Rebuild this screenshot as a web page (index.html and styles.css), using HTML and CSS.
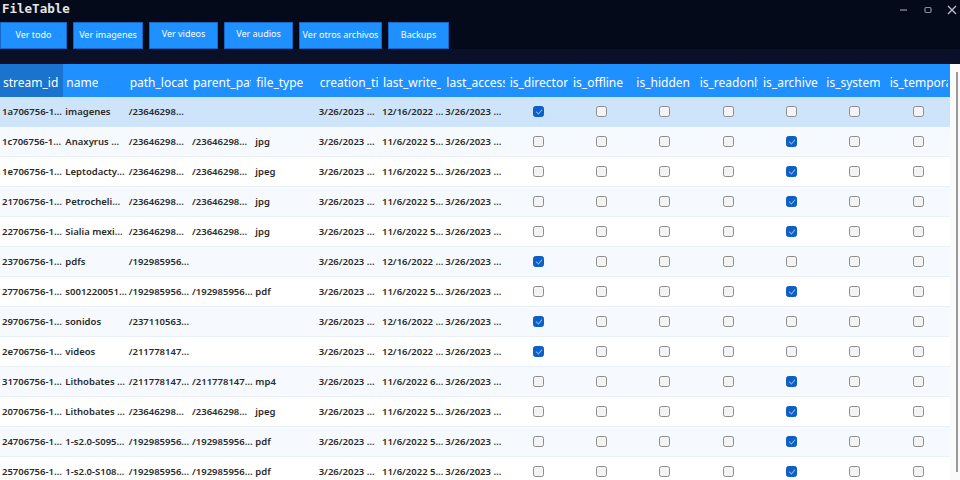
FILE: index.html
```html
<!DOCTYPE html>
<html>
<head>
<meta charset="utf-8">
<link rel="stylesheet" href="styles.css">
</head>
<body>
<div class="window">
  <div class="titlebar">
    <div class="title">FileTable</div>
    <div class="controls">
      <svg class="ctl" width="24" height="20" viewBox="0 0 24 20"><line x1="8" y1="10" x2="15" y2="10" stroke="#8a8f9c" stroke-width="1.3"/></svg>
      <svg class="ctl" width="24" height="20" viewBox="0 0 24 20"><rect x="9" y="7.5" width="6" height="5" rx="1.2" fill="none" stroke="#8a8f9c" stroke-width="1.2"/></svg>
      <svg class="ctl" width="24" height="20" viewBox="0 0 24 20"><path d="M8 6 L16 14 M16 6 L8 14" stroke="#b8bcc6" stroke-width="1.4"/></svg>
    </div>
  </div>
  <div class="toolbar">
    <button class="btn w1">Ver todo</button>
    <button class="btn w2">Ver imagenes</button>
    <button class="btn w3 up">Ver videos</button>
    <button class="btn w4 up">Ver audios</button>
    <button class="btn w5">Ver otros archivos</button>
    <button class="btn w6">Backups</button>
  </div>
  <div class="band"></div>
  <div class="gridwrap">
    <div class="grid" id="grid">
      <div class="hd first"><span class="clip">stream_id</span></div>
      <div class="hd"><span class="clip">name</span></div>
      <div class="hd"><span class="clip">path_locator</span></div>
      <div class="hd"><span class="clip">parent_path_locator</span></div>
      <div class="hd"><span class="clip">file_type</span></div>
      <div class="hd"><span class="clip">creation_time</span></div>
      <div class="hd"><span class="clip">last_write_time</span></div>
      <div class="hd"><span class="clip">last_access_time</span></div>
      <div class="hd"><span class="clip">is_directory</span></div>
      <div class="hd"><span class="clip">is_offline</span></div>
      <div class="hd"><span class="clip">is_hidden</span></div>
      <div class="hd"><span class="clip">is_readonly</span></div>
      <div class="hd"><span class="clip">is_archive</span></div>
      <div class="hd"><span class="clip">is_system</span></div>
      <div class="hd"><span class="clip">is_temporary</span></div>
    </div>
    <div class="scroll"><div class="thumb"></div></div>
  </div>
</div>
<script src="script.js"></script>
</body>
</html>
```

FILE: script.js
```js
const rows = [
  ["1a706756-1…","imagenes","/23646298…","","","3/26/2023 …","12/16/2022 …","3/26/2023 …",1,0],
  ["1c706756-1…","Anaxyrus …","/23646298…","/23646298…","jpg","3/26/2023 …","11/6/2022 5…","3/26/2023 …",0,1],
  ["1e706756-1…","Leptodacty…","/23646298…","/23646298…","jpeg","3/26/2023 …","11/6/2022 5…","3/26/2023 …",0,1],
  ["21706756-1…","Petrocheli…","/23646298…","/23646298…","jpg","3/26/2023 …","11/6/2022 5…","3/26/2023 …",0,1],
  ["22706756-1…","Sialia mexi…","/23646298…","/23646298…","jpg","3/26/2023 …","11/6/2022 5…","3/26/2023 …",0,1],
  ["23706756-1…","pdfs","/192985956…","","","3/26/2023 …","12/16/2022 …","3/26/2023 …",1,0],
  ["27706756-1…","s001220051…","/192985956…","/192985956…","pdf","3/26/2023 …","11/6/2022 5…","3/26/2023 …",0,1],
  ["29706756-1…","sonidos","/237110563…","","","3/26/2023 …","12/16/2022 …","3/26/2023 …",1,0],
  ["2e706756-1…","videos","/211778147…","","","3/26/2023 …","12/16/2022 …","3/26/2023 …",1,0],
  ["31706756-1…","Lithobates …","/211778147…","/211778147…","mp4","3/26/2023 …","11/6/2022 6…","3/26/2023 …",0,1],
  ["20706756-1…","Lithobates …","/23646298…","/23646298…","jpeg","3/26/2023 …","11/6/2022 5…","3/26/2023 …",0,1],
  ["24706756-1…","1-s2.0-S095…","/192985956…","/192985956…","pdf","3/26/2023 …","11/6/2022 5…","3/26/2023 …",0,1],
  ["25706756-1…","1-s2.0-S108…","/192985956…","/192985956…","pdf","3/26/2023 …","11/6/2022 5…","3/26/2023 …",0,1]
];
const grid = document.getElementById('grid');
rows.forEach((r, i) => {
  const cls = i === 0 ? 'sel' : (i % 2 === 1 ? 'alt' : 'plain');
  for (let c = 0; c < 8; c++) {
    const d = document.createElement('div');
    d.className = 'cell ' + cls;
    d.textContent = r[c];
    grid.appendChild(d);
  }
  const checks = [r[8], 0, 0, 0, r[9], 0, 0];
  checks.forEach(v => {
    const d = document.createElement('div');
    d.className = 'cell chk ' + cls;
    const b = document.createElement('span');
    b.className = v ? 'box on' : 'box';
    d.appendChild(b);
    grid.appendChild(d);
  });
});
```

FILE: styles.css
```css
* { box-sizing: border-box; }
html, body { margin: 0; padding: 0; }
body { width: 960px; height: 480px; overflow: hidden; background: #ffffff; font-family: "Noto Sans", "Open Sans", sans-serif; }
.window { display: flex; flex-direction: column; height: 480px; }
.titlebar { background: #050a1b; height: 22px; display: flex; justify-content: space-between; align-items: flex-start; }
.title { font-family: "DejaVu Sans Mono", monospace; font-weight: bold; font-size: 12.5px; color: #e4e4e4; padding: 1px 0 0 2px; }
.controls { display: flex; margin-right: -4px; }
.ctl { display: block; }
.toolbar { background: #050a1b; display: flex; gap: 6px; height: 27px; }
.btn { height: 27px; background: #1e90ff; border: 1px solid #1768c4; color: #ffffff; font-family: "Noto Sans", "Open Sans", sans-serif; font-size: 9px; padding: 0 0 2px; margin: 0; display: flex; align-items: center; justify-content: center; }
.btn.up { padding-bottom: 5px; }
.w1 { width: 67px; } .w2 { width: 70px; } .w3 { width: 69px; } .w4 { width: 69px; } .w5 { width: 83px; } .w6 { width: 61px; }
.band { background: #0a1028; height: 15px; }
.gridwrap { display: flex; flex: 1; overflow: hidden; }
.grid { width: 950px; display: grid; grid-template-columns: repeat(15, 1fr); grid-template-rows: 33px; grid-auto-rows: 30px; align-content: start; }
.scroll { width: 10px; background: #fafafa; position: relative; }
.thumb { position: absolute; left: 6px; top: 8px; width: 1.5px; height: 400px; background: #9a9a9a; }
.hd { background: #1e90ff; color: #ffffff; font-family: "Noto Sans", sans-serif; font-size: 12px; padding: 3px 2px 0 3px; display: flex; align-items: center; min-width: 0; }
.clip { display: block; white-space: nowrap; overflow: hidden; min-width: 0; }
.hd.first { background: #1a74cf; }
.cell { font-size: 9.5px; font-weight: 600; color: #2a2a2a; white-space: nowrap; overflow: hidden; padding: 0 2px 0 2px; display: flex; align-items: center; border-bottom: 1px solid #eaf0f7; }
.cell.sel { background: #cde4fb; border-bottom-color: #cde4fb; }
.cell.alt { background: #f6faff; }
.cell.plain { background: #ffffff; }
.chk { justify-content: center; padding: 0; }
.box { width: 11px; height: 11px; border: 1px solid #8c8c8c; border-radius: 2.5px; background: #f3f3f3; position: relative; }
.box.on { background: #0b5fc6; border-color: #0b5fc6; }
.box.on::after { content: ""; position: absolute; left: 3px; top: 1px; width: 3px; height: 5px; border-right: 1px solid #8fb3e6; border-bottom: 1px solid #8fb3e6; transform: rotate(40deg); }
```
